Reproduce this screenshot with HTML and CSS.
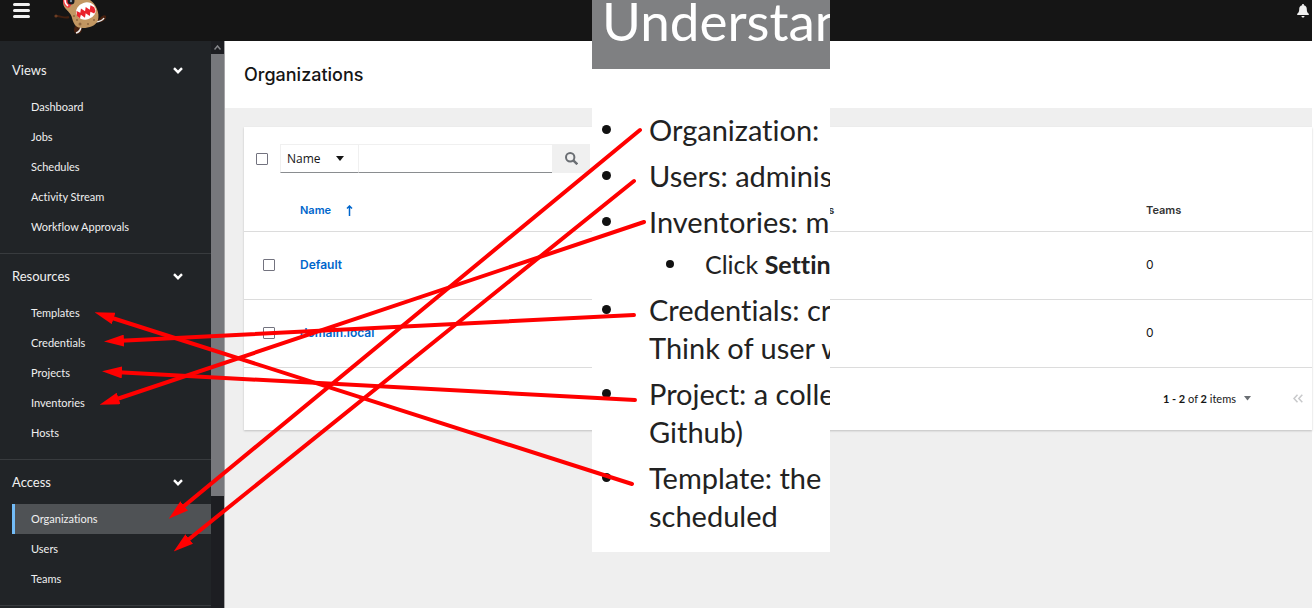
FILE: index.html
```
<!DOCTYPE html>
<html lang="en">
<head>
<meta charset="utf-8">
<title>Organizations</title>
<link rel="stylesheet" href="styles.css">
</head>
<body>
<div class="app">
  <header class="masthead">
    <button class="icon-button menu-button" type="button" aria-label="Menu">
      <svg width="17" height="15" viewBox="0 0 17 15"><path d="M1.500 1.500h14M1.500 7.500h14M1.500 13.500h14" stroke="#f0f0f0" stroke-width="3" stroke-linecap="round"/></svg>
    </button>
    <svg class="mascot" width="60" height="40" viewBox="0 0 60 40" role="img" aria-label="AWX">
      <path d="M19 17C15 19 11 16 7 16" fill="none" stroke="#431f0f" stroke-width="2"/>
      <circle cx="6" cy="16" r="1.600" fill="#6b3d24"/>
      <path d="M42 21c4 1 7-1 9-4 3-3 6-2 5 1-1 3-5 5-10 4z" fill="#46200f"/>
      <path d="M45 22q7-.500 9-4" fill="none" stroke="#eee" stroke-width="1.500"/>
      <path d="M25 26l7 2c0 4-2 6-5 6-3-1-4-3-2-8z" fill="#46200f"/>
      <path d="M26 33q4-1 5-6" fill="none" stroke="#eee" stroke-width="1.500"/>
      <path d="M14 0H40C46 4 50 13 48 20C46 26 39 28 33 28C26 28 24 25 22 18C21 13 18 12 15 8Q12 4 14 0z" fill="#c29762"/>
      <path d="M13 0h9c0 4-1 7-4 8-4-2-5-5-5-8z" fill="#ef3b43"/>
      <path d="M15 0q0 4 3 6" fill="none" stroke="#fff" stroke-width="1.500"/>
      <circle cx="21" cy="1" r="3.500" fill="#17191e"/><circle cx="21" cy="1" r="1.200" fill="#7d93a7"/>
      <g transform="rotate(-18 36 11)">
        <ellipse cx="36" cy="11" rx="10" ry="8.500" fill="#fff"/>
        <path d="M27 8l3 3 2-4 3 4 2-4 3 4 2-4 3 3v4l-2 2-3-3-2 4-3-4-2 4-3-4-2 3-2-3z" fill="#e9232d"/>
      </g>
      <g fill="#8f6740"><circle cx="30" cy="24" r="1.500"/><circle cx="24" cy="16" r="1"/><circle cx="38" cy="24" r="1"/><circle cx="44" cy="20" r="1"/><circle cx="27" cy="20" r="1"/></g>
    </svg>
    <button class="icon-button bell-button" type="button" aria-label="Notifications">
      <svg width="12" height="14" viewBox="0 0 12 14" fill="#f0f0f0"><path d="M5.200 0h1.600v1.200C9 1.600 9.800 3.200 9.800 5.200c0 2.300.600 3.400 2 4.500V11H.200V9.700c1.400-1.100 2-2.200 2-4.500 0-2 .800-3.600 3-4zM4.500 12h3c0 2-3 2-3 0z"/></svg>
    </button>
  </header>

  <div class="body">
    <nav class="sidebar">
      <section class="nav-group">
        <button class="nav-heading" type="button">Views <svg width="10" height="7" viewBox="0 0 10 7"><path d="M1 1.200l4 4 4-4" fill="none" stroke="#fff" stroke-width="2.400"/></svg></button>
        <a class="nav-link" href="#">Dashboard</a>
        <a class="nav-link" href="#">Jobs</a>
        <a class="nav-link" href="#">Schedules</a>
        <a class="nav-link" href="#">Activity Stream</a>
        <a class="nav-link" href="#">Workflow Approvals</a>
      </section>
      <section class="nav-group">
        <button class="nav-heading" type="button">Resources <svg width="10" height="7" viewBox="0 0 10 7"><path d="M1 1.200l4 4 4-4" fill="none" stroke="#fff" stroke-width="2.400"/></svg></button>
        <a class="nav-link" href="#">Templates</a>
        <a class="nav-link" href="#">Credentials</a>
        <a class="nav-link" href="#">Projects</a>
        <a class="nav-link" href="#">Inventories</a>
        <a class="nav-link" href="#">Hosts</a>
      </section>
      <section class="nav-group">
        <button class="nav-heading" type="button">Access <svg width="10" height="7" viewBox="0 0 10 7"><path d="M1 1.200l4 4 4-4" fill="none" stroke="#fff" stroke-width="2.400"/></svg></button>
        <a class="nav-link current" href="#" aria-current="page">Organizations</a>
        <a class="nav-link" href="#">Users</a>
        <a class="nav-link" href="#">Teams</a>
      </section>
    </nav>
    <div class="scrollbar" aria-hidden="true">
      <div class="scroll-up"><svg width="7" height="5" viewBox="0 0 7 5"><path d="M.500 4.500l3-3.500 3 3.500" fill="none" stroke="#85868a" stroke-width="1.500"/></svg></div>
      <div class="scroll-thumb"></div>
    </div>

    <main class="content">
      <div class="page-header"><h1>Organizations</h1></div>
      <div class="card">
        <form class="toolbar">
          <input class="check" type="checkbox" aria-label="Select all">
          <div class="search">
            <div class="select-wrap">
              <select aria-label="Search by"><option>Name</option></select>
              <svg class="caret" width="8" height="5" viewBox="0 0 8 5"><path d="M0 0h8L4 5z" fill="#151515"/></svg>
            </div>
            <input class="search-text" type="text" aria-label="Search">
            <button class="search-button" type="button" aria-label="Run search">
              <svg width="13" height="13" viewBox="0 0 13 13" fill="none" stroke="#6a6e73" stroke-width="2"><circle cx="5.200" cy="5.200" r="4.200"/><path d="M8.300 8.300l4 4" stroke-width="2.400"/></svg>
            </button>
          </div>
        </form>
        <table class="orgs">
          <colgroup><col class="col-check"><col class="col-name"><col class="col-members"><col></colgroup>
          <thead>
            <tr>
              <td></td>
              <th scope="col"><button class="sort" type="button">Name <svg width="7" height="11" viewBox="0 0 7 11"><path d="M3.500 11V1M1 3.500L3.500 1 6 3.500" fill="none" stroke="#06c" stroke-width="1.500"/></svg></button></th>
              <th scope="col">Members</th>
              <th scope="col">Teams</th>
            </tr>
          </thead>
          <tbody>
            <tr>
              <td class="check-cell"><input class="check" type="checkbox" aria-label="Select Default"></td>
              <td><a href="#">Default</a></td><td></td><td>0</td>
            </tr>
            <tr>
              <td class="check-cell"><input class="check" type="checkbox" aria-label="Select domain.local"></td>
              <td><a href="#">domain.local</a></td><td></td><td>0</td>
            </tr>
          </tbody>
        </table>
        <div class="pagination">
          <button class="per-page" type="button"><span><b>1 - 2</b> of <b>2</b> items</span> <svg width="7" height="5" viewBox="0 0 7 5"><path d="M0 0h7L3.500 4.500z" fill="#6a6e73"/></svg></button>
          <button class="icon-button" type="button" aria-label="First page" disabled><svg width="10" height="9" viewBox="0 0 10 9"><path d="M4.500.700L1 4.500l3.500 3.800M9.300.700L5.800 4.500l3.500 3.800" fill="none" stroke="#c8c9cb" stroke-width="1.500"/></svg></button>
        </div>
      </div>
    </main>
  </div>
</div>

<aside class="slide">
  <h2>Understan</h2>
  <ul>
    <li>Organization:</li>
    <li>Users: adminis</li>
    <li>Inventories: m
      <ul><li>Click <b>Settin</b></li></ul>
    </li>
    <li>Credentials: cr<br>Think of user w</li>
    <li>Project: a colle<br>Github)</li>
    <li>Template: the<br>scheduled</li>
  </ul>
</aside>

<svg class="arrows" width="660" height="570" viewBox="0 0 660 570" aria-hidden="true">
  <defs>
    <marker id="head" markerUnits="userSpaceOnUse" markerWidth="20" markerHeight="12" refX="8" refY="6" orient="auto"><path d="M0 0L20 6L0 12z" fill="#f00"/></marker>
  </defs>
  <g stroke="#f00" stroke-width="4" stroke-linecap="round">
    <path d="M640 130L178 511" marker-end="url(#head)"/>
    <path d="M634 181L183 544" marker-end="url(#head)"/>
    <path d="M644 222L111 401" marker-end="url(#head)"/>
    <path d="M634 315L116 341" marker-end="url(#head)"/>
    <path d="M635 400L114 372" marker-end="url(#head)"/>
    <path d="M632 484L106 316" marker-end="url(#head)"/>
  </g>
</svg>
</body>
</html>
```

FILE: styles.css
```
* { box-sizing: border-box; }

body {
  margin: 0;
  background: #fff;
  color: #151515;
  font: 12px/18px Lato, sans-serif;
  font-variant-ligatures: none;
}

button, input, select { font: inherit; color: inherit; }
button { margin: 0; padding: 0; border: 0; background: none; }
svg { display: block; flex: none; }
a { color: #06c; text-decoration: none; }

.app {
  display: flex;
  flex-direction: column;
  height: calc(100vh - 8px);
  min-height: 560px;
  margin-right: 3px;
}

.masthead {
  display: flex;
  align-items: flex-start;
  flex: none;
  height: 41px;
  padding: 0 3px 0 13px;
  background: #151515;
}
.menu-button { margin-top: 3px; }
.mascot { margin-left: 20px; }
.bell-button { margin: 4px 0 0 auto; }

.body { display: flex; flex: 1; min-height: 0; }

.sidebar {
  flex: none;
  width: 211px;
  padding-top: 7px;
  overflow: hidden;
  background: #212427;
  color: #f0f0f0;
}
.nav-group {
  padding-bottom: 11px;
  border-bottom: 1px solid #383b3e;
}
.nav-heading {
  display: flex;
  align-items: center;
  justify-content: space-between;
  width: 100%;
  height: 44px;
  padding: 0 28px 0 12px;
  font-size: 13px;
}
.nav-link {
  display: block;
  margin-left: 12px;
  padding-left: 19px;
  color: #f0f0f0;
  font-size: 11px;
  line-height: 30px;
}
.current {
  padding-left: 16px;
  border-left: 3px solid #73bcf7;
  background: #4f5255;
}

.scrollbar {
  display: flex;
  flex-direction: column;
  flex: none;
  width: 14px;
  border-right: 1px solid #a5a5a7;
  background: #1d1e22;
}
.scroll-up { display: grid; place-items: center; height: 13px; }
.scroll-thumb { height: 78%; background: #77787c; }

.content { flex: 1; min-width: 0; background: #efefef; }
.page-header { padding: 22px 19px; background: #fff; }
h1 { margin: 0; font: 500 18px/23px Inter, sans-serif; }

.card {
  margin: 19px 0 0 19px;
  background: #fff;
  box-shadow: 0 1px 2px #0003;
}
.toolbar {
  display: flex;
  align-items: center;
  gap: 12px;
  height: 63px;
  padding: 0 12px;
}
.check {
  appearance: none;
  width: 12px;
  height: 12px;
  margin: 0;
  border: 1px solid #73737f;
  border-radius: 1px;
  background: #fff;
}
.search { display: flex; height: 29px; }
.select-wrap { position: relative; width: 79px; }
.select-wrap select {
  appearance: none;
  width: 100%;
  height: 100%;
  padding: 0 6px;
  border: 1px solid #f0f0f0;
  border-bottom-color: #8a8d90;
  border-radius: 0;
  background: #fff;
  font: 12px/18px "Open Sans", sans-serif;
}
.caret { position: absolute; top: 12px; right: 15px; }
.search-text {
  width: 193px;
  border: 1px solid #f0f0f0;
  border-width: 1px 0;
  border-bottom-color: #8a8d90;
}
.search-button {
  display: grid;
  place-items: center;
  width: 38px;
  background: #f0f0f0;
}

.orgs {
  width: 100%;
  table-layout: fixed;
  border-collapse: collapse;
  font: 11px/18px Inter, sans-serif;
}
.col-check { width: 56px; }
.col-name { width: 484px; }
.col-members { width: 362px; }
.orgs th, .orgs td {
  height: 68px;
  padding: 0;
  border-bottom: 1px solid #dcdcdc;
  text-align: left;
}
.orgs thead th, .orgs thead td { height: 41px; color: #333; font-weight: 600; }
.orgs .check-cell { padding-left: 19px; }
.check-cell .check { display: block; }
.orgs tbody { font-size: 12px; }
.orgs a { font-weight: 600; }
.sort { display: flex; align-items: center; gap: 15px; color: #06c; }

.pagination {
  display: flex;
  align-items: center;
  justify-content: flex-end;
  gap: 42px;
  height: 62px;
  padding-right: 9px;
}
.per-page {
  display: flex;
  align-items: center;
  gap: 8px;
  font-size: 11px;
}

/* Slide laid over the application window */
.slide {
  position: absolute;
  top: 0;
  left: 592px;
  width: 238px;
  padding-bottom: 17px;
  overflow: hidden;
  background: #fff;
  color: #222;
  font: 29px/38px Lato, sans-serif;
  font-variant-ligatures: none;
  white-space: nowrap;
}
.slide h2 {
  margin: 0;
  padding: 0 0 27px 10px;
  background: #7f8082;
  color: #fff;
  font: 53px/42px Lato, sans-serif;
}
.slide ul { margin: 0; padding: 0; list-style: none; }
.slide > ul { display: grid; gap: 8px; padding: 42px 0 0 57px; }
.slide li { position: relative; }
.slide li::before {
  content: "";
  position: absolute;
  top: 14px;
  left: -47px;
  width: 9px;
  height: 9px;
  border-radius: 50%;
  background: #111;
}
.slide li ul { padding: 5px 0 0 56px; font-size: 25px; line-height: 37px; }
.slide li li::before { left: -39px; width: 8px; height: 8px; }

.arrows {
  position: absolute;
  top: 0;
  left: 0;
  pointer-events: none;
}
```
